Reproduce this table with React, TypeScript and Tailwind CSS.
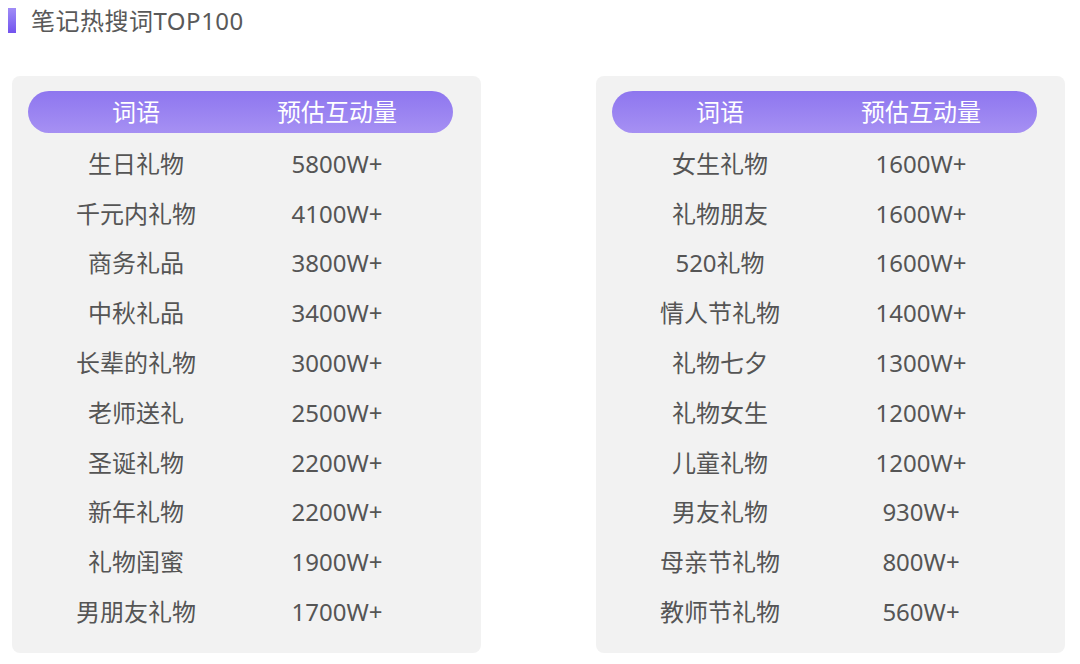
const left = [
  ["生日礼物", "5800W+"],
  ["千元内礼物", "4100W+"],
  ["商务礼品", "3800W+"],
  ["中秋礼品", "3400W+"],
  ["长辈的礼物", "3000W+"],
  ["老师送礼", "2500W+"],
  ["圣诞礼物", "2200W+"],
  ["新年礼物", "2200W+"],
  ["礼物闺蜜", "1900W+"],
  ["男朋友礼物", "1700W+"],
]

const right = [
  ["女生礼物", "1600W+"],
  ["礼物朋友", "1600W+"],
  ["520礼物", "1600W+"],
  ["情人节礼物", "1400W+"],
  ["礼物七夕", "1300W+"],
  ["礼物女生", "1200W+"],
  ["儿童礼物", "1200W+"],
  ["男友礼物", "930W+"],
  ["母亲节礼物", "800W+"],
  ["教师节礼物", "560W+"],
]

function Table({ rows }: { rows: string[][] }) {
  return (
    <div className="w-[469px] h-[577px] bg-[#f2f2f2] rounded-[8px] pl-[16px] pt-[15px]">
      {/* header pill */}
      <div className="w-[425px] h-[42px] rounded-full bg-gradient-to-b from-[#8e76ef] to-[#a690f3] flex items-center text-white text-[24px] leading-none">
        <div className="w-[216px] text-center">词语</div>
        <div className="w-[186px] text-center">预估互动量</div>
      </div>
      <div className="mt-[6px]">
        {rows.map(([word, count]) => (
          <div key={word} className="h-[49.8px] flex items-center text-[24px] leading-none text-[#555555]">
            <div className="w-[216px] text-center">{word}</div>
            <div className="w-[186px] text-center">{count}</div>
          </div>
        ))}
      </div>
    </div>
  )
}

export default function App() {
  return (
    <div
      className="w-[1080px] h-[664px] bg-white overflow-hidden"
      style={{ fontFamily: '"Noto Sans", "Noto Sans CJK SC", sans-serif' }}
    >
      <div className="h-[41px] flex items-center pl-[8px] gap-[15px]">
        <div className="w-[8px] h-[25px] bg-gradient-to-b from-[#a08cf6] to-[#7352ee]" />
        <span className="text-[24px] leading-none tracking-[0.5px] text-[#595959]">笔记热搜词TOP100</span>
      </div>
      <div className="mt-[35px] pl-[12px] flex gap-[115px]">
        <Table rows={left} />
        <Table rows={right} />
      </div>
    </div>
  )
}
